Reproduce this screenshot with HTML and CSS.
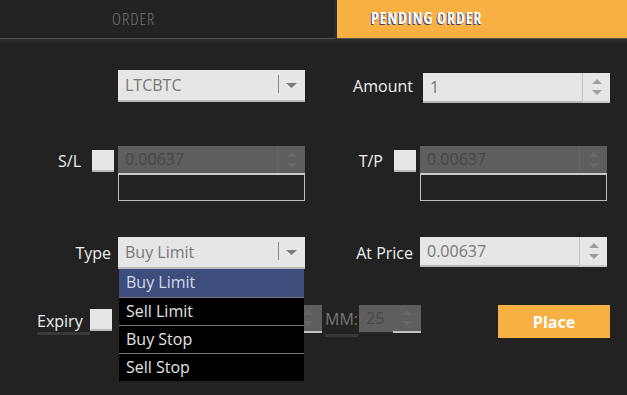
FILE: index.html
```html
<!DOCTYPE html>
<html lang="en">
  <head>
    <meta charset="utf-8">
    <title>Pending Order</title>
    <link rel="stylesheet" href="styles.css">
  </head>
  <body>
    <!-- order type tabs -->
    <div class="tabs">
      <div class="tab">ORDER</div>
      <div class="tab tab-active">PENDING ORDER</div>
    </div>

    <div class="form">
      <!-- symbol / amount -->
      <div class="row">
        <div class="label-l"></div>
        <div class="select">
          <span class="select-text">LTCBTC</span>
          <span class="select-btn"><i class="divider"></i><svg width="11" height="5" viewBox="0 0 11 5"><path d="M0 0H11L5.5 5Z" fill="#7a7a7a"/></svg></span>
        </div>
        <div class="label-r">Amount</div>
        <div class="spin spin-amount">
          <span class="spin-field">1</span>
          <span class="spin-btn"><svg width="10" height="16" viewBox="0 0 10 16"><path d="M0 5L5 0L10 5Z M0 11L5 16L10 11Z" fill="#9d9d9d"/></svg></span>
        </div>
      </div>

      <!-- stop loss / take profit -->
      <div class="row row-tall">
        <div class="label-l"><span>S/L</span><i class="check"></i></div>
        <div class="stack">
          <div class="spin is-off">
            <span class="spin-field">0.00637</span>
            <span class="spin-btn"><svg width="10" height="16" viewBox="0 0 10 16"><path d="M0 5L5 0L10 5Z M0 11L5 16L10 11Z" fill="#686868"/></svg></span>
          </div>
          <div class="stack-box"></div>
        </div>
        <div class="label-r label-tp"><span>T/P</span><i class="check"></i></div>
        <div class="stack">
          <div class="spin is-off">
            <span class="spin-field">0.00637</span>
            <span class="spin-btn"><svg width="10" height="16" viewBox="0 0 10 16"><path d="M0 5L5 0L10 5Z M0 11L5 16L10 11Z" fill="#686868"/></svg></span>
          </div>
          <div class="stack-box"></div>
        </div>
      </div>

      <!-- type / price -->
      <div class="row row-type">
        <div class="label-l">Type</div>
        <div class="select select-wrap">
          <span class="select-text">Buy Limit</span>
          <span class="select-btn"><i class="divider"></i><svg width="11" height="5" viewBox="0 0 11 5"><path d="M0 0H11L5.5 5Z" fill="#7a7a7a"/></svg></span>
          <ul class="menu">
            <li class="menu-item is-active">Buy Limit</li>
            <li class="menu-item">Sell Limit</li>
            <li class="menu-item">Buy Stop</li>
            <li class="menu-item">Sell Stop</li>
          </ul>
        </div>
        <div class="label-r">At Price</div>
        <div class="spin spin-price">
          <span class="spin-field">0.00637</span>
          <span class="spin-btn"><svg width="10" height="16" viewBox="0 0 10 16"><path d="M0 5L5 0L10 5Z M0 11L5 16L10 11Z" fill="#9d9d9d"/></svg></span>
        </div>
      </div>

      <!-- expiry / place -->
      <div class="row row-expiry">
        <div class="label-expiry"><span class="expiry-text">Expiry</span><i class="check"></i></div>
        <div class="time">
          <div class="spin is-off spin-time spin-hour">
            <span class="spin-field"></span>
            <span class="spin-btn"><svg width="10" height="16" viewBox="0 0 10 16"><path d="M0 5L5 0L10 5Z M0 11L5 16L10 11Z" fill="#686868"/></svg></span>
          </div>
          <span class="time-label">MM:</span>
          <div class="spin is-off spin-time spin-min">
            <span class="spin-field">25</span>
            <span class="spin-btn"><svg width="10" height="16" viewBox="0 0 10 16"><path d="M0 5L5 0L10 5Z M0 11L5 16L10 11Z" fill="#686868"/></svg></span>
          </div>
        </div>
        <button class="place">Place</button>
      </div>
    </div>
  </body>
</html>
```

FILE: styles.css
```css
* {
  box-sizing: border-box;
}
html, body {
  margin: 0;
  padding: 0;
  background-color: #222;
  color: #eee;
  font-family: "Open Sans", "Liberation Sans", sans-serif;
  font-size: 16px;
}
body {
  min-height: 100vh;
}

/* tabs */
.tabs {
  display: flex;
  height: 43px;
  border-bottom: 4px solid #2a2a2a;
}
.tab {
  width: 337px;
  height: 39px;
  line-height: 37px;
  padding-left: 112px;
  border-right: 3px solid #2b2b2b;
  border-bottom: 1px solid #525252;
  color: #777;
  font-weight: 300;
  font-size: 17px;
  font-stretch: 75%;
  letter-spacing: 1px;
}
.tab-active {
  flex: 1;
  width: auto;
  padding-left: 34px;
  border-right: 0;
  background-color: #f9b042;
  color: #fff;
  font-size: 16px;
  font-weight: 700;
  letter-spacing: 0.75px;
  text-shadow: -1px 1px 0 #2f3d7a;
}

/* form rows */
.form {
  padding-top: 27px;
}
.row {
  display: flex;
  align-items: flex-start;
}
.row-tall {
  margin-top: 43px;
}
.row-type,
.row-expiry {
  margin-top: 36px;
}
.label-l,
.label-r {
  display: flex;
  align-items: center;
  justify-content: flex-end;
  height: 32px;
  padding-right: 7px;
}
.label-l {
  width: 118px;
}
.label-r {
  width: 115px;
}
.row-tall .label-l,
.row-tall .label-r {
  height: 30px;
  padding-right: 4px;
  gap: 11px;
}
.label-tp {
  gap: 12px;
}
.check {
  display: block;
  width: 22px;
  height: 22px;
  background-color: #e6e6e6;
  border-bottom: 2px solid #b9b9b9;
}

/* select box */
.select {
  display: flex;
  width: 187px;
  height: 32px;
  background-color: #e6e6e6;
  border-bottom: 2px solid #b9b9b9;
  color: #777;
}
.select-text {
  flex: 1;
  padding-left: 7px;
  line-height: 30px;
}
.select-btn {
  display: flex;
  align-items: center;
  width: 27px;
  gap: 7px;
}
.divider {
  display: block;
  width: 1px;
  height: 18px;
  margin-top: -2px;
  background-color: #888;
}
.select-wrap {
  position: relative;
}

/* dropdown list */
.menu {
  position: absolute;
  top: 32px;
  left: 1px;
  z-index: 1;
  width: 185px;
  margin: 0;
  padding: 0;
  list-style: none;
  background-color: #000;
}
.menu-item {
  height: 28px;
  line-height: 27px;
  padding-left: 7px;
  border-top: 1px solid #7a7a7a;
  color: #e4e4e4;
}
.menu-item.is-active {
  border-top: 0;
  background-color: #3d4d7c;
  color: #d4d9ea;
}

/* number spinner */
.spin {
  display: flex;
  width: 187px;
  height: 30px;
  background-color: #e6e6e6;
  color: #777;
}
.spin-field {
  flex: 1;
  padding-left: 7px;
  line-height: 28px;
  border-bottom: 2px solid #b5b5b5;
}
.spin-btn {
  display: flex;
  align-items: center;
  justify-content: center;
  width: 28px;
  border-left: 1px solid #c2c2c2;
  border-bottom: 2px solid #cbcbcb;
}
.spin-amount {
  margin-top: 3px;
  margin-left: 3px;
}
.spin.is-off {
  background-color: #5e5e5e;
  color: #474747;
}
.spin.is-off .spin-field,
.spin.is-off .spin-btn {
  border-bottom: 0;
  line-height: 27px;
}
.spin.is-off .spin-btn {
  border-left-color: #666;
}

/* SL / TP stacked boxes */
.stack {
  width: 187px;
}
.stack .spin {
  height: 27px;
}
.stack-box {
  height: 28px;
  border: 1px solid #bdbdbd;
  border-top: 2px solid #cacaca;
}

/* expiry row */
.row-expiry {
  height: 33px;
}
.label-expiry {
  display: flex;
  align-items: flex-start;
  width: 118px;
  height: 33px;
  padding-left: 37px;
}
.expiry-text {
  width: 53px;
  margin-top: 5px;
  line-height: 22px;
  border-bottom: 3px solid #3a3a3a;
}
.label-expiry .check {
  margin-top: 4px;
}
.time {
  display: flex;
  align-items: flex-start;
  justify-content: flex-end;
  width: 303px;
}
.spin-time {
  height: 28px;
}
.spin.is-off.spin-time .spin-field {
  border-bottom: 1px solid #2e2e2e;
}
.spin.is-off.spin-time .spin-btn {
  border-left: 0;
  border-bottom: 2px solid #c4c4c4;
}
.spin-hour {
  width: 70px;
}
.spin-min {
  width: 62px;
}
.time-label {
  margin: 0 1px 0 3px;
  height: 32px;
  line-height: 29px;
  color: #777;
  border-bottom: 3px solid #383838;
}
.place {
  width: 112px;
  height: 33px;
  margin-left: 77px;
  padding: 0;
  border: 0;
  background-color: #f9b042;
  color: #fff;
  font-family: inherit;
  font-size: 16px;
  font-weight: 700;
}
```
